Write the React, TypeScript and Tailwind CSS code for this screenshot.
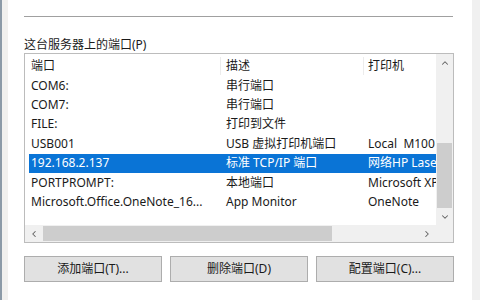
import { ChevronUp, ChevronDown, ChevronLeft, ChevronRight } from 'lucide-react';

//
//

interface PortRow {
  port: string;
  desc: string;
  printer: string;
  selected?: boolean;
}

const rows: PortRow[] = [
  { port: 'COM6:', desc: '串行端口', printer: '' },
  { port: 'COM7:', desc: '串行端口', printer: '' },
  { port: 'FILE:', desc: '打印到文件', printer: '' },
  { port: 'USB001', desc: 'USB 虚拟打印机端口', printer: 'Local  M100' },
  { port: '192.168.2.137', desc: '标准 TCP/IP 端口', printer: '网络HP LaserJet', selected: true },
  { port: 'PORTPROMPT:', desc: '本地端口', printer: 'Microsoft XPS' },
  { port: 'Microsoft.Office.OneNote_16...', desc: 'App Monitor', printer: 'OneNote' },
];

const font = { fontFamily: '"Noto Sans", "Noto Sans CJK SC", sans-serif' };

const PortButton = ({ label }: { label: string }) => (
  <button className="h-[26px] w-[138px] border border-[#adadad] bg-[#e1e1e1] text-[12px] text-[#1a1a1a]">
    {label}
  </button>
);

export default function App() {
  return (
    <div className="flex h-[300px] w-[480px] overflow-hidden bg-white" style={font}>
      <div className="w-[2px] bg-[#8c9aa7]" />
      <div className="w-[6px] bg-[#f1f0ee]" />

      <div className="flex w-[462px] flex-col pl-[16px] pr-[16px]">
        <div className="mt-[16px] h-[2px] w-[429px] border-t border-[#a0a0a0] border-b-[#e6e6e6]" />

        <p className="mt-[18px] h-[17px] text-[12px] leading-[17px] text-[#1a1a1a]">这台服务器上的端口(P)</p>

        <div className="flex h-[190px] w-[430px] flex-col border border-[#bcbcbc]">
          <div className="flex h-[171px]">
            <div className="flex w-[411px] flex-col overflow-hidden text-[12px] text-[#1a1a1a]">
              <div className="flex h-[22px] shrink-0 items-center pt-[2px]">
                <div className="w-[196px] shrink-0 border-r border-[#ececec] pl-[6px]">端口</div>
                <div className="w-[143px] shrink-0 border-r border-[#ececec] pl-[5px]">描述</div>
                <div className="shrink-0 pl-[4px]">打印机</div>
              </div>
              {rows.map((row, index) => (
                <div
                  key={`port-${index}`}
                  className={`ml-[4px] flex h-[19.4px] shrink-0 items-center whitespace-pre ${
                    row.selected ? 'bg-[#0a74d6] text-white' : ''
                  }`}
                >
                  <div className="w-[192px] shrink-0 pl-[2px]">{row.port}</div>
                  <div className="w-[143px] shrink-0 pl-[5px]">{row.desc}</div>
                  <div className="shrink-0 pl-[4px]">{row.printer}</div>
                </div>
              ))}
            </div>

            <div className="flex w-[17px] flex-col items-center bg-[#f0f0f0]">
              <ChevronUp className="mt-[4px] h-[10px] w-[10px] text-[#606060]" strokeWidth={2.5} />
              <div className="mt-[75px] h-[65px] w-[15px] bg-[#cdcdcd]" />
              <ChevronDown className="mt-[4px] h-[10px] w-[10px] text-[#606060]" strokeWidth={2.5} />
            </div>
          </div>

          <div className="flex h-[17px]">
            <div className="flex w-[411px] items-center bg-[#f0f0f0]">
              <ChevronLeft className="ml-[4px] h-[10px] w-[10px] text-[#606060]" strokeWidth={2.5} />
              <div className="ml-[4px] h-[15px] w-[289px] bg-[#cdcdcd]" />
              <ChevronRight className="ml-auto mr-[4px] h-[10px] w-[10px] text-[#606060]" strokeWidth={2.5} />
            </div>
            <div className="w-[17px] bg-[#f0f0f0]" />
          </div>
        </div>

        <div className="mt-[13px] flex w-[430px] justify-between">
          <PortButton label="添加端口(T)..." />
          <PortButton label="删除端口(D)" />
          <PortButton label="配置端口(C)..." />
        </div>
      </div>

      <div className="w-[2px] bg-white" />
      <div className="flex-1 bg-[#f0f0f0]" />
    </div>
  );
}
